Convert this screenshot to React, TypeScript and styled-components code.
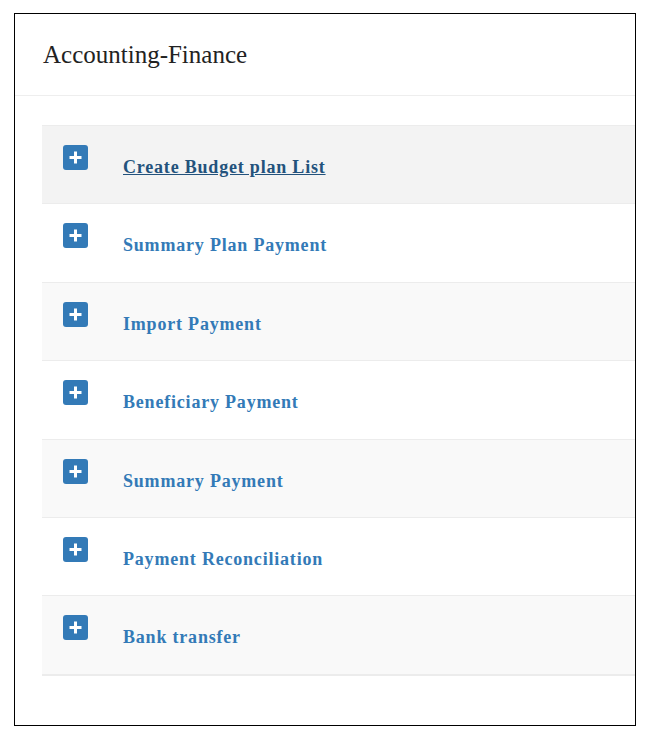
import React from "react";
import styled, { createGlobalStyle } from "styled-components";

const GlobalStyle = createGlobalStyle`
  html, body {
    margin: 0;
    padding: 0;
    background: #fff;
  }
  body {
    font-family: "Liberation Serif", "Times New Roman", serif;
  }
`;

const Page = styled.div`
  padding: 13px 0 0 14px;
`;

const Panel = styled.div`
  width: 620px;
  height: 711px;
  border: 1px solid #000;
  overflow: hidden;
  background: #fff;
`;

const Header = styled.div`
  height: 82px;
  box-sizing: border-box;
  border-bottom: 1px solid #eee;
  padding: 26px 0 0 28px;
`;

const Title = styled.h1`
  margin: 0;
  font-size: 25px;
  line-height: 30px;
  font-weight: normal;
  color: #222;
`;

const List = styled.ul`
  list-style: none;
  margin: 29px 0 0 27px;
  padding: 0;
  width: 640px;
`;

const Row = styled.li<{ $shade: string }>`
  display: flex;
  align-items: flex-start;
  height: 77.4px;
  padding-left: 21px;
  background: ${(p) => p.$shade};
  border-top: 1px solid #ececec;
  &:last-child {
    border-bottom: 2px solid #ececec;
  }
`;

const PlusBox = styled.span`
  margin-top: 19px;
  width: 25px;
  height: 25px;
  border-radius: 3px;
  background: #337ab7;
  display: flex;
  align-items: center;
  justify-content: center;
  flex-shrink: 0;
`;

const Link = styled.a<{ $active?: boolean }>`
  margin: 31px 0 0 35px;
  line-height: 20px;
  font-size: 18px;
  font-weight: bold;
  letter-spacing: 0.8px;
  color: ${(p) => (p.$active ? "#23527c" : "#337ab7")};
  text-decoration: ${(p) => (p.$active ? "underline" : "none")};
  cursor: pointer;
`;

const items = [
  "Create Budget plan List",
  "Summary Plan Payment",
  "Import Payment",
  "Beneficiary Payment",
  "Summary Payment",
  "Payment Reconciliation",
  "Bank transfer",
];

const Plus = () => (
  <svg width="15" height="15" viewBox="0 0 15 15">
    <path d="M7.5 1.5v12M1.5 7.5h12" stroke="#fff" strokeWidth="3" />
  </svg>
);

export default function App() {
  return (
    <>
      <GlobalStyle />
      <Page>
        <Panel>
          <Header>
            <Title>Accounting-Finance</Title>
          </Header>
          <List>
            {items.map((label, i) => (
              <Row
                key={label}
                $shade={i === 0 ? "#f3f3f3" : i % 2 === 0 ? "#f9f9f9" : "#fff"}
              >
                <PlusBox>
                  <Plus />
                </PlusBox>
                <Link $active={i === 0}>{label}</Link>
              </Row>
            ))}
          </List>
        </Panel>
      </Page>
    </>
  );
}
